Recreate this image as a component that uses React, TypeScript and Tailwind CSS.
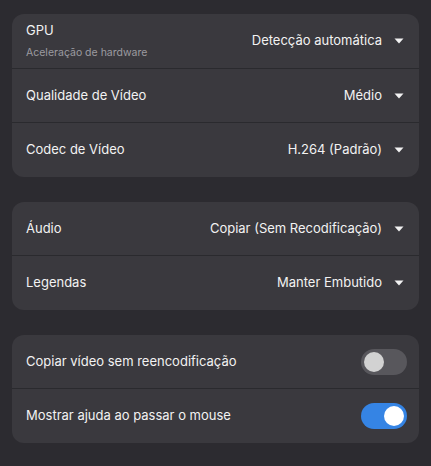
import { useState } from 'react';

type SelectRowProps = { label: string; sub?: string; value: string; last?: boolean; tall?: boolean };

function Caret() {
  return (
    <svg width="10" height="6" viewBox="0 0 10 6" className="shrink-0">
      <path d="M0.5 0.5 L9.5 0.5 L5 5.5 Z" fill="#f2f2f2" />
    </svg>
  );
}

function SelectRow({ label, sub, value, last, tall }: SelectRowProps) {
  return (
    <div className={`flex ${tall ? 'h-[55px]' : 'h-[54px]'} items-center justify-between pl-[14px] pr-[15px] ${last ? '' : 'border-b border-[#2a2a2e]'}`}>
      <div className="flex flex-col">
        <span className="text-[13px] text-[#f2f2f2]">{label}</span>
        {sub && <span className="mt-[4px] text-[10.5px] text-[#9c9ba0]">{sub}</span>}
      </div>
      <div className="flex items-center gap-[12px]">
        <span className="text-[13px] text-[#f2f2f2]">{value}</span>
        <Caret />
      </div>
    </div>
  );
}

function Toggle({ on, onChange }: { on: boolean; onChange: () => void }) {
  return (
    <button
      onClick={onChange}
      className={`flex h-[26px] w-[46px] items-center rounded-full px-[3px] ${on ? 'justify-end bg-[#3584e4]' : 'justify-start bg-[#58575c]'}`}
    >
      <span className={`h-[20px] w-[20px] rounded-full ${on ? 'bg-white' : 'bg-[#d2d2d2]'}`} />
    </button>
  );
}

function ToggleRow({ label, on, onChange, last }: { label: string; on: boolean; onChange: () => void; last?: boolean }) {
  return (
    <div className={`flex h-[54px] items-center justify-between pl-[14px] pr-[12px] ${last ? '' : 'border-b border-[#2a2a2e]'}`}>
      <span className="text-[13px] text-[#f2f2f2]">{label}</span>
      <Toggle on={on} onChange={onChange} />
    </div>
  );
}

export default function App() {
  const [copyVideo, setCopyVideo] = useState(false);
  const [hoverHelp, setHoverHelp] = useState(true);

  return (
    <div className="flex min-h-screen flex-col gap-[25px] bg-[#2c2b30] px-[12px] pt-[14px] pb-[22px] font-['Inter',sans-serif]">
      {/* Video */}
      <div className="overflow-hidden rounded-[12px] bg-[#3a393e]">
        <SelectRow label="GPU" sub="Aceleração de hardware" value="Detecção automática" tall />
        <SelectRow label="Qualidade de Vídeo" value="Médio" />
        <SelectRow label="Codec de Vídeo" value="H.264 (Padrão)" last />
      </div>

      {/* Audio / subs */}
      <div className="overflow-hidden rounded-[12px] bg-[#3a393e]">
        <SelectRow label="Áudio" value="Copiar (Sem Recodificação)" />
        <SelectRow label="Legendas" value="Manter Embutido" last />
      </div>

      {/* Toggles */}
      <div className="overflow-hidden rounded-[12px] bg-[#3a393e]">
        <ToggleRow label="Copiar vídeo sem reencodificação" on={copyVideo} onChange={() => setCopyVideo(!copyVideo)} />
        <ToggleRow label="Mostrar ajuda ao passar o mouse" on={hoverHelp} onChange={() => setHoverHelp(!hoverHelp)} last />
      </div>
    </div>
  );
}
